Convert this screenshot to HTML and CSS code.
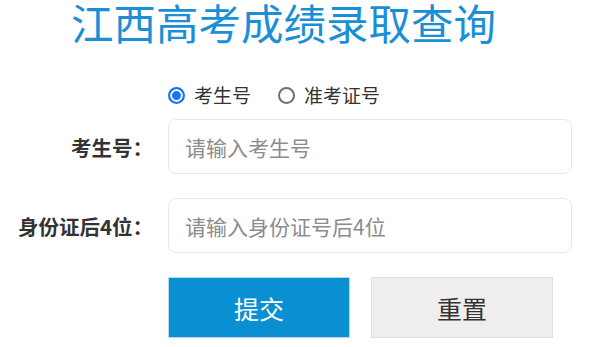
FILE: index.html
```html
<!DOCTYPE html>
<html lang="zh-CN">
<head>
<meta charset="utf-8">
<title>江西高考成绩录取查询</title>
<link rel="stylesheet" href="styles.css">
</head>
<body>
<div class="page">
  <h1 class="title">江西高考成绩录取查询</h1>
  <form class="form">
    <div class="radios">
      <label class="radio"><input type="radio" name="type" checked><span>考生号</span></label>
      <label class="radio"><input type="radio" name="type"><span>准考证号</span></label>
    </div>
    <label class="label" for="ksh">考生号：</label>
    <input class="field" id="ksh" type="text" placeholder="请输入考生号">
    <label class="label" for="sfz">身份证后4位：</label>
    <input class="field" id="sfz" type="text" placeholder="请输入身份证号后4位">
    <div class="actions">
      <button type="button" class="btn btn-primary">提交</button>
      <button type="reset" class="btn btn-reset">重置</button>
    </div>
  </form>
</div>
</body>
</html>
```

FILE: styles.css
```css
* { box-sizing: border-box; }
html, body { margin: 0; padding: 0; background: #fff; }
body {
  font-family: "Noto Sans CJK SC", "Noto Sans", "Liberation Sans", sans-serif;
  color: #333;
}
.page { width: 600px; }
.title {
  margin: 0;
  padding-left: 71px;
  font-size: 42.5px;
  font-weight: 400;
  line-height: 44px;
  height: 46px;
  color: #1a8fd6;
  white-space: nowrap;
}
.form {
  display: grid;
  grid-template-columns: 153px 404px;
  column-gap: 15px;
  row-gap: 24px;
  margin-top: 38px;
  align-items: center;
}
.radios {
  grid-column: 2;
  display: flex;
  align-items: center;
  gap: 27px;
  height: 22px;
  margin-bottom: -11px;
}
.radio {
  display: flex;
  align-items: center;
  gap: 9px;
  font-size: 19px;
  line-height: 22px;
  color: #333;
}
.radio input {
  appearance: none;
  -webkit-appearance: none;
  margin: 0;
  width: 17px;
  height: 17px;
  border-radius: 50%;
  border: 2px solid #6f6f6f;
  background: #fff;
}
.radio input:checked {
  border-color: #1a73f0;
  background: #1a73f0;
  box-shadow: inset 0 0 0 2px #fff;
}
.label {
  grid-column: 1;
  text-align: right;
  font-size: 20.5px;
  font-weight: 700;
  color: #333;
  white-space: nowrap;
}
.field {
  grid-column: 2;
  height: 55px;
  border: 1px solid #e8e8e8;
  border-radius: 8px;
  padding: 0 16px;
  font-family: inherit;
  font-size: 21px;
  color: #333;
  outline: none;
}
.field::placeholder { color: #8c8c8c; }
.actions {
  grid-column: 2;
  display: flex;
  gap: 21px;
}
.btn {
  width: 182px;
  height: 61px;
  font-family: inherit;
  font-size: 25px;
  border-radius: 0;
  padding: 0;
  cursor: pointer;
}
.btn-primary {
  background: #0a8fd3;
  color: #fff;
  border: 1px solid #b8d8ee;
}
.btn-reset {
  background: #efeded;
  color: #333;
  border: 1px solid #e0dddd;
}
```
